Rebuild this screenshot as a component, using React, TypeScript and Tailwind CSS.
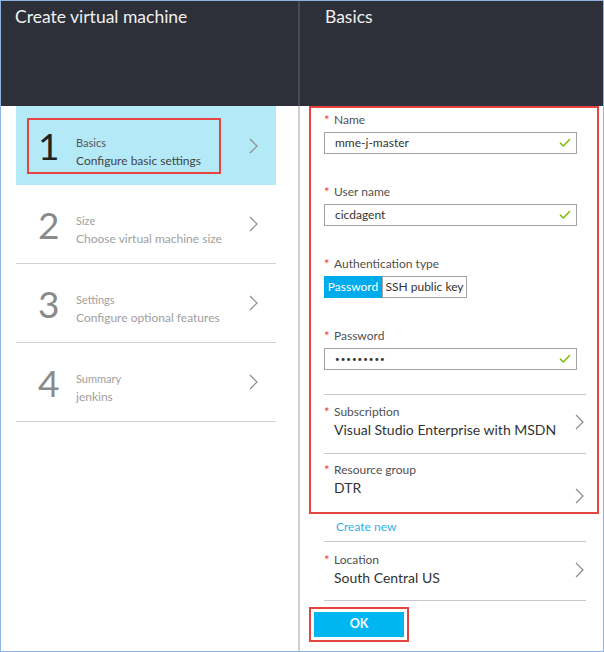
import { Check } from 'lucide-react';

const font = "font-['Lato','Liberation_Sans',sans-serif]";

type Step = { n: number; title: string; sub: string; active?: boolean };

const steps: Step[] = [
    { n: 1, title: 'Basics', sub: 'Configure basic settings', active: true },
    { n: 2, title: 'Size', sub: 'Choose virtual machine size' },
    { n: 3, title: 'Settings', sub: 'Configure optional features' },
    { n: 4, title: 'Summary', sub: 'jenkins' },
];

function Chevron({ className = '' }: { className?: string }) {
    return (
        <svg width="9" height="16" viewBox="0 0 9 16" className={className}>
            <path d="M1 1l7 7-7 7" fill="none" stroke="#8a8a8a" strokeWidth="1.2" />
        </svg>
    );
}

function Label({ text }: { text: string }) {
    return (
        <div className="h-4 flex items-center text-[12px] text-[#505050] leading-4 whitespace-nowrap">
            <span className="w-[10px] text-[#e0403c] text-[13px] leading-4">*</span>
            <span>{text}</span>
        </div>
    );
}

function TextInput({ value, dots }: { value: string; dots?: boolean }) {
    return (
        <div className="mt-[4px] h-[22px] w-[253px] border border-[#a3a3a3] flex items-center justify-between pl-[10px] pr-[4px] text-[12px] text-[#333]">
            <span className={dots ? 'text-[8px] tracking-[1px] leading-none' : 'leading-none'}>{value}</span>
            <Check className="w-[14px] h-[14px] text-[#7fba00]" strokeWidth={2.5} />
        </div>
    );
}

function PickerRow({ label, value }: { label: string; value: string }) {
    return (
        <div className="flex items-center justify-between pr-[2px]">
            <div className="whitespace-nowrap">
                <Label text={label} />
                <div className="pl-[10px] h-5 leading-5 text-[14px] text-[#333]">{value}</div>
            </div>
            <Chevron className="shrink-0" />
        </div>
    );
}

export default function App() {
    return (
        <div className={`${font} w-[604px] h-[652px] border border-[#8fb3e0] bg-white flex flex-col overflow-hidden`}>
            {/* Header */}
            <div className="h-[105px] bg-[#2d3038] flex shrink-0">
                <div className="w-[297px] shrink-0 pl-[14px] pt-[3px] text-[17.5px] text-[#f0f0f0]">Create virtual machine</div>
                <div className="w-[2px] bg-[#484b52]" />
                <div className="flex-1 pl-[25px] pt-[3px] text-[17.5px] text-[#f0f0f0]">Basics</div>
            </div>

            {/* Body */}
            <div className="flex flex-1">
                {/* Steps */}
                <div className="w-[297px] shrink-0 pl-[15px]">
                    <div className="w-[260px]">
                        {steps.map((s) => (
                            <div
                                key={s.n}
                                className={`h-[79px] flex items-center ${s.active ? 'bg-[#b4e9f8]' : 'border-b border-[#d2d2d2]'}`}
                            >
                                <div
                                    className={`flex items-center h-[56px] w-[194px] ml-[11px] whitespace-nowrap ${s.active ? 'border-2 border-[#e5443f]' : 'border-2 border-transparent'}`}
                                >
                                    <div className={`w-[37px] shrink-0 pl-[9px] text-[37px] leading-none ${s.active ? 'text-[#222]' : 'text-[#8a8a8a]'}`}>{s.n}</div>
                                    <div className="pl-[10px] pt-[12px]">
                                        <div className={`text-[11px] leading-[18px] ${s.active ? 'text-[#555]' : 'text-[#a0a0a0]'}`}>{s.title}</div>
                                        <div className={`text-[12px] leading-[18px] ${s.active ? 'text-[#444]' : 'text-[#a0a0a0]'}`}>{s.sub}</div>
                                    </div>
                                </div>
                                <Chevron className="ml-auto mr-[18px] shrink-0" />
                            </div>
                        ))}
                    </div>
                </div>

                <div className="w-[2px] shrink-0 bg-[#cfcfcf]" />

                {/* Form */}
                <div className="flex-1 min-w-0 pl-[9px] pr-[4px]">
                    <div className="h-[408px] border-2 border-[#e5443f] pl-[13px] pr-[11px] pt-[4px]">
                        <div className="h-[72px]">
                            <Label text="Name" />
                            <TextInput value="mme-j-master" />
                        </div>
                        <div className="h-[72px]">
                            <Label text="User name" />
                            <TextInput value="cicdagent" />
                        </div>
                        <div className="h-[72px]">
                            <Label text="Authentication type" />
                            <div className="mt-[4px] flex h-[22px] text-[12px]">
                                <div className="w-[58px] bg-[#00abec] text-white flex items-center justify-center">Password</div>
                                <div className="w-[85px] border border-[#a3a3a3] text-[#333] flex items-center justify-center">SSH public key</div>
                            </div>
                        </div>
                        <div className="h-[66px]">
                            <Label text="Password" />
                            <TextInput value="•••••••••" dots />
                        </div>
                        <div className="border-t border-[#c8c8c8] pt-[9px] h-[59px]">
                            <PickerRow label="Subscription" value="Visual Studio Enterprise with MSDN" />
                        </div>
                        <div className="border-t border-[#c8c8c8] pt-[8px] flex items-end justify-between pr-[2px]">
                            <div>
                                <Label text="Resource group" />
                                <div className="pl-[10px] h-5 leading-5 text-[14px] text-[#333]">DTR</div>
                            </div>
                            <Chevron className="mb-[-6px]" />
                        </div>
                    </div>

                    <div className="pl-[15px] pr-[13px]">
                        <div className="pl-[12px] pt-[5px] h-[27px] text-[12px] text-[#34b1e8] leading-4">Create new</div>
                        <div className="border-t border-[#c8c8c8] pt-[10px] h-[59px]">
                            <PickerRow label="Location" value="South Central US" />
                        </div>
                        <div className="border-t border-[#c8c8c8]" />
                    </div>

                    <div className="mt-[6px] w-[100px] h-[35px] border-2 border-[#e5443f] p-[3px]">
                        <div className="h-full bg-[#00b6f0] text-white text-[12.5px] font-bold flex items-center justify-center">OK</div>
                    </div>
                </div>
            </div>
        </div>
    );
}
